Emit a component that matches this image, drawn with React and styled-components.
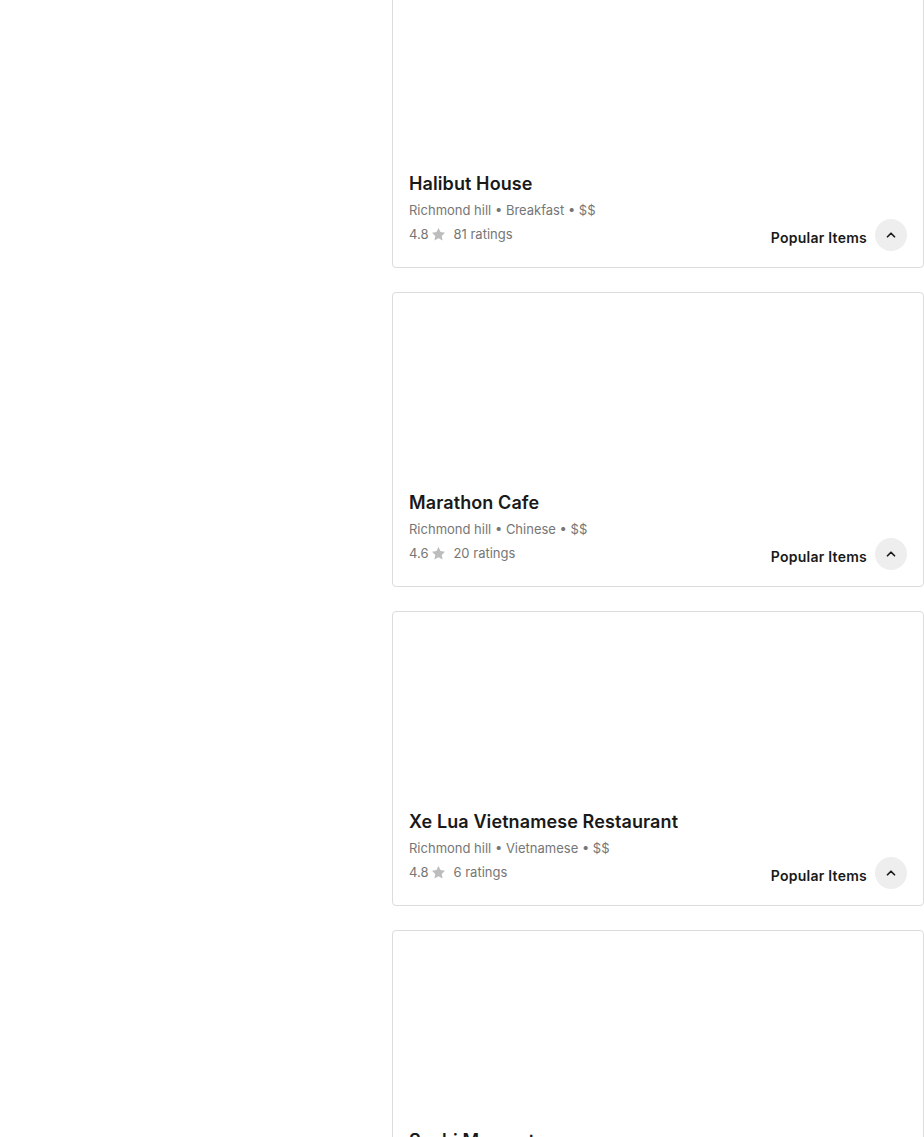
import styled, { createGlobalStyle } from 'styled-components';

// Estilos globales
const Global = createGlobalStyle`
	body {
		margin: 0;
		background: #ffffff;
		font-family: Inter, "Noto Sans", sans-serif;
		color: #191919;
		overflow: hidden;
	}
`;

const Pagina = styled.div`
	display: flex;
	height: 1137px;
	overflow: hidden;
`;

// Columna izquierda vacia
const Lateral = styled.div`
	width: 392px;
	flex-shrink: 0;
`;

// Lista desplazada (scroll)
const Lista = styled.div`
	display: flex;
	flex-direction: column;
	gap: 24px;
	margin-top: -27px;
	width: 532px;
`;

const Tarjeta = styled.div`
	box-sizing: border-box;
	flex-shrink: 0;
	height: 295px;
	border: 1px solid #dcdcdc;
	border-radius: 4px;
	padding: 0 16px 16px 16px;
	display: flex;
	flex-direction: column;
	justify-content: flex-end;
	background: #fff;
`;

const Fila = styled.div`
	display: flex;
	align-items: flex-end;
	justify-content: space-between;
`;

const Info = styled.div`
	display: flex;
	flex-direction: column;
	margin-bottom: 7px;
`;

const Titulo = styled.div`
	font-size: 18px;
	line-height: 24px;
	font-weight: 600;
	letter-spacing: 0.1px;
	margin-bottom: 4px;
`;

const Meta = styled.div`
	font-size: 13px;
	line-height: 20px;
	color: #767676;
	margin-bottom: 4px;
`;

const Calificacion = styled.div`
	display: flex;
	align-items: center;
	gap: 3px;
	font-size: 13px;
	line-height: 20px;
	color: #767676;
	svg {
		margin-right: 4px;
	}
`;

const Populares = styled.div`
	display: flex;
	align-items: center;
	gap: 8px;
	span {
		font-size: 14px;
		font-weight: 600;
		letter-spacing: 0.25px;
		color: #191919;
		margin-top: 4px;
	}
`;

const Boton = styled.button`
	width: 32px;
	height: 32px;
	border-radius: 50%;
	border: none;
	background: #eeeeee;
	display: flex;
	align-items: center;
	justify-content: center;
	padding: 0;
`;

const Estrella = () => (
	<svg width="15" height="15" viewBox="0 0 24 24">
		<path
			fill="#bdbdbd"
			d="M12 1.5l3.2 6.6 7.2 1-5.2 5.1 1.3 7.2L12 18l-6.5 3.4 1.3-7.2-5.2-5.1 7.2-1z"
		/>
	</svg>
);

const Chevron = () => (
	<svg width="14" height="14" viewBox="0 0 24 24">
		<path
			d="M6 15l6-6 6 6"
			fill="none"
			stroke="#191919"
			strokeWidth="3"
			strokeLinecap="round"
			strokeLinejoin="round"
		/>
	</svg>
);

const restaurantes = [
	{ nombre: 'Halibut House', tipo: 'Breakfast', nota: '4.8', votos: 81 },
	{ nombre: 'Marathon Cafe', tipo: 'Chinese', nota: '4.6', votos: 20 },
	{ nombre: 'Xe Lua Vietnamese Restaurant', tipo: 'Vietnamese', nota: '4.8', votos: 6 },
	{ nombre: 'Sushi Moment', tipo: 'Japanese', nota: '4.7', votos: 35 },
];

const App = () => {
	return (
		<Pagina>
			<Global />
			<Lateral />
			<Lista>
				{restaurantes.map((r) => (
					<Tarjeta key={r.nombre}>
						<Fila>
							<Info>
								<Titulo>{r.nombre}</Titulo>
								<Meta>Richmond hill • {r.tipo} • $$</Meta>
								<Calificacion>
									{r.nota}
									<Estrella />
									{r.votos} ratings
								</Calificacion>
							</Info>
							<Populares>
								<span>Popular Items</span>
								<Boton>
									<Chevron />
								</Boton>
							</Populares>
						</Fila>
					</Tarjeta>
				))}
			</Lista>
		</Pagina>
	);
};

export default App;
